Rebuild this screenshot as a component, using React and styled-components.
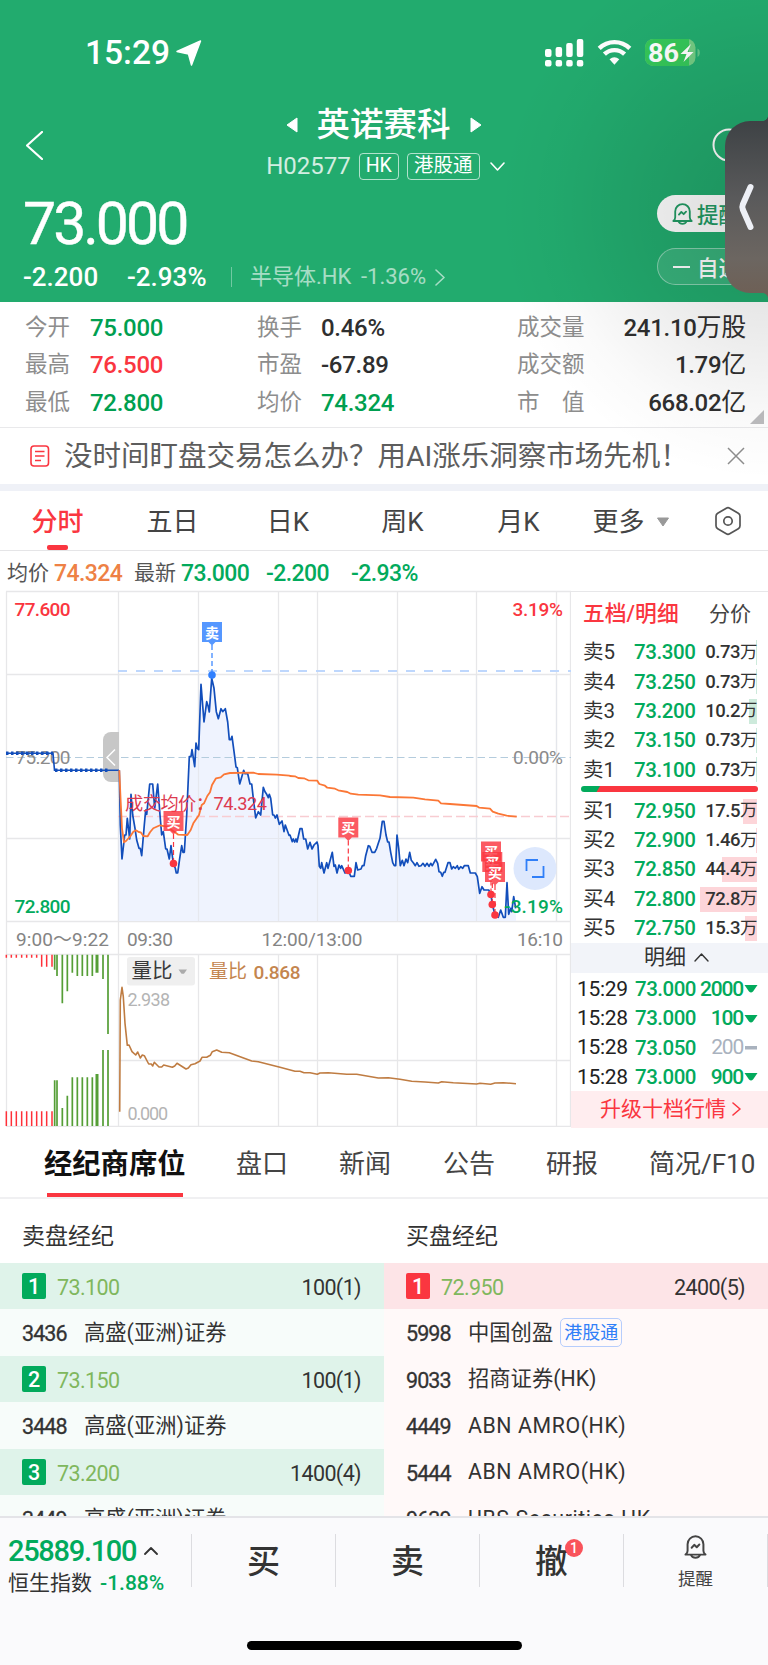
import React from 'react'
import styled, { createGlobalStyle } from 'styled-components'

const GREEN = '#02aa5c'
const RED = '#fa3640'

const sellLevels = [
  { label: '卖5', price: '73.300', vol: '0.73', bar: 1 },
  { label: '卖4', price: '73.250', vol: '0.73', bar: 1 },
  { label: '卖3', price: '73.200', vol: '10.2', bar: 8 },
  { label: '卖2', price: '73.150', vol: '0.73', bar: 1 },
  { label: '卖1', price: '73.100', vol: '0.73', bar: 1 },
]

const buyLevels = [
  { label: '买1', price: '72.950', vol: '17.5', bar: 14 },
  { label: '买2', price: '72.900', vol: '1.46', bar: 1 },
  { label: '买3', price: '72.850', vol: '44.4', bar: 35 },
  { label: '买4', price: '72.800', vol: '72.8', bar: 57 },
  { label: '买5', price: '72.750', vol: '15.3', bar: 12 },
]

const trades = [
  { time: '15:29', price: '73.000', qty: '2000', down: true },
  { time: '15:28', price: '73.000', qty: '100', down: true },
  { time: '15:28', price: '73.050', qty: '200', down: false },
  { time: '15:28', price: '73.000', qty: '900', down: true },
]

const sellBrokers = [
  { level: 1, price: '73.100', total: '100(1)' },
  { code: '3436', name: '高盛(亚洲)证券' },
  { level: 2, price: '73.150', total: '100(1)' },
  { code: '3448', name: '高盛(亚洲)证券' },
  { level: 3, price: '73.200', total: '1400(4)' },
  { code: '3449', name: '高盛(亚洲)证券' },
]

const buyBrokers = [
  { level: 1, price: '72.950', total: '2400(5)' },
  { code: '5998', name: '中国创盈', tag: '港股通' },
  { code: '9033', name: '招商证券(HK)' },
  { code: '4449', name: 'ABN AMRO(HK)', latin: true },
  { code: '5444', name: 'ABN AMRO(HK)', latin: true },
  { code: '9639', name: 'UBS Securities HK', latin: true },
]

// intraday series, first and second half of the session, three units per pixel
const priceA =
  '358,556 361,720 366,822 374,750 378,750 382,700 389,762 393,628 398,690 405,730 410,765 417,790 421,790 425,812 433,720 437,675 440,688 449,597 458,597 464,670 466,655 473,597 480,690 485,750 490,740 497,792 501,792 508,822 513,782 520,835 526,850 529,864 533,864 539,820 545,782 549,802 553,802 560,690 568,515 573,514 576,494 584,545 588,474 592,490 596,494 603,298 612,411 620,350 624,362 628,381 635,280 642,310 649,380 655,401 663,371 668,380 676,371 683,411 688,464 692,464 696,454 704,515 708,546 712,548 719,597 731,556 735,566 743,566 750,597 755,597 760,640 767,699 775,680 782,690 790,607 795,620 800,628 805,638 808,628 812,640 818,690 822,690 826,699 831,690 838,718 846,708 852,740 856,720 867,751'
const priceB =
  '0,750 7,770 10,762 14,771 18,762 21,771 30,731 36,731 41,762 47,762 53,792 60,772 66,792 72,780 81,771 84,782 88,844 92,850 95,833 102,864 110,833 114,850 127,802 132,844 136,840 141,864 147,840 152,850 155,842 165,864 175,856 182,874 193,874 198,833 203,855 213,852 217,842 222,842 227,812 235,782 239,784 246,802 254,802 260,790 265,775 270,760 277,709 282,709 288,750 293,771 297,771 302,802 308,833 313,842 317,842 321,750 326,790 331,842 337,826 342,842 348,822 353,833 359,802 364,826 370,833 376,842 381,833 387,844 393,842 399,835 405,844 411,835 417,844 422,835 427,842 437,823 443,835 447,860 452,862 457,874 461,862 465,862 474,833 480,833 485,852 490,845 496,850 502,842 506,853 512,845 518,850 523,842 535,842 541,864 556,864 562,875 569,925 576,905 582,915 596,915 603,928 607,958 615,989 625,997 632,975 640,997 646,997 651,893 656,988 662,970 665,980 671,935 677,970'
const avgA =
  '358,556 362,650 366,730 372,772 378,768 390,755 400,740 408,736 416,741 422,742 430,753 443,754 450,742 460,730 480,721 500,725 525,742 535,749 562,750 572,735 580,715 597,690 605,660 612,655 622,633 630,622 636,600 648,580 662,577 672,568 690,564 760,563 775,567 830,569 868,572'
const avgB =
  '0,573 15,574 25,579 42,580 55,586 82,587 88,597 105,602 112,608 135,611 145,616 172,621 182,626 205,629 270,631 300,636 370,638 405,643 445,647 453,655 480,657 560,663 568,668 600,671 608,680 625,686 650,692 680,695'
const ratioLine =
  '359,545 361,210 366,172 370,200 375,280 382,346 387,345 396,365 407,375 413,366 421,384 427,375 433,377 446,402 454,402 458,408 463,397 477,411 485,411 491,405 517,412 524,408 531,400 558,417 565,414 573,404 585,401 600,393 606,382 620,382 631,376 637,365 650,360 665,367 688,368 755,393 775,395 840,412 885,424 900,424 912,428 930,428 952,433 960,429 985,428 1040,433 1070,433 1135,444 1165,443 1200,448 1235,454 1275,456 1315,459 1325,455 1360,458 1430,462 1440,460 1472,463 1485,459 1510,458 1548,461'

const shift = (points, dx, dy) =>
  points
    .split(' ')
    .map((p) => {
      const [x, y] = p.split(',').map(Number)
      return `${(x / 3 + dx).toFixed(1)},${(y / 3 + dy).toFixed(1)}`
    })
    .join(' ')

const pricePoints = `${shift(priceA, 0, 5)} ${shift(priceB, 290, 5)}`
const avgPoints = `${shift(avgA, 0, 5)} ${shift(avgB, 290, 5)}`
const ratioPoints = shift(ratioLine, 0, 350)

const gridX = [118.5, 198.5, 278.5, 317.5, 397.5, 476.5, 556.5]
const redBars = [19, 34, 49, 65, 80, 95, 110, 125, 140, 156]
const greenBars = [
  { x: 164, top: 119, bottom: 451 },
  { x: 171, top: 138, bottom: 451 },
  { x: 187, top: 220, bottom: 534 },
  { x: 202, top: 184, bottom: 497 },
  { x: 217, top: 128, bottom: 442 },
  { x: 232, top: 138, bottom: 442 },
  { x: 247, top: 138, bottom: 442 },
  { x: 262, top: 138, bottom: 442 },
  { x: 277, top: 138, bottom: 442 },
  { x: 291, top: 128, bottom: 432, wide: true },
  { x: 309, top: 147, bottom: 360 },
  { x: 324, top: 312, bottom: 360 },
]

const label = { fontSize: 19, fontWeight: 500, fontFamily: 'Roboto, "Noto Sans CJK SC", sans-serif' }

function Bell({ size }) {
  return (
    <svg width={size} height={size} viewBox="0 0 24 24" fill="none" stroke="currentColor" strokeWidth="1.9" strokeLinecap="round" strokeLinejoin="round">
      <path d="M2.4 19.8H21.6C19.8 18.6 19.6 17.600 19.6 16V9.800a7.600 7.600 0 0 0-15.200 0V16C4.400 17.600 4.200 18.600 2.400 19.800z" />
      <path d="M7.800 20.200q1.200 2.600 4.200 2.600t4.200-2.600M8.300 13.200l2.500-2.800 2.400 2.300 2.500-2.600" />
    </svg>
  )
}

function Chevron({ dir, w, h, stroke = 1.6 }) {
  const paths = {
    left: `M${w - 1} 1L1 ${h / 2}L${w - 1} ${h - 1}`,
    right: `M1 1L${w - 1} ${h / 2}L1 ${h - 1}`,
    up: `M1 ${h - 1}L${w / 2} 1L${w - 1} ${h - 1}`,
    down: `M1 1L${w / 2} ${h - 1}L${w - 1} 1`,
  }
  return (
    <svg width={w} height={h} fill="none" stroke="currentColor" strokeWidth={stroke} strokeLinecap="round" strokeLinejoin="round">
      <path d={paths[dir]} />
    </svg>
  )
}

function StatusIcons() {
  return (
    <svg width="158" height="30" viewBox="0 0 158 30">
      <g fill="#fff">
        <rect x="1" y="10" width="6.5" height="8" rx="2" />
        <rect x="11.6" y="8" width="6.5" height="10" rx="2" />
        <rect x="22.2" y="4" width="6.5" height="14" rx="2" />
        <rect x="32.8" y="0" width="6.5" height="18" rx="2" />
        <rect x="1" y="21" width="6.5" height="6.5" rx="2" />
        <rect x="11.6" y="21" width="6.5" height="6.5" rx="2" />
        <rect x="22.2" y="21" width="6.5" height="6.5" rx="2" />
        <rect x="32.8" y="21" width="6.5" height="6.5" rx="2" />
        <path d="M65.5 20.2a8 8 0 0 1 9.8 0L70.4 25.8z" />
      </g>
      <g fill="none" stroke="#fff" strokeWidth="4.4">
        <path d="M55.2 9.3a22 22 0 0 1 30.6 0" />
        <path d="M60.4 15.2a14.5 14.5 0 0 1 20.2 0" />
      </g>
      <rect x="101" y="0" width="50.5" height="27" rx="8.5" fill="#73cc83" />
      <path d="M109.5 0H145v27h-35.5a8.5 8.5 0 0 1-8.5-8.5v-10a8.500 8.500 0 0 1 8.500-8.500z" fill="#35c759" />
      <path d="M153.5 9.5a5 5 0 0 1 0 8.5z" fill="#62c688" />
      <text x="104" y="22.5" fontSize="25" fontWeight="700" fill="#fff" textLength="31" lengthAdjust="spacingAndGlyphs">86</text>
      <path d="M147 5l-10.5 10h6l-3 8 10-10h-6z" fill="#fff" />
    </svg>
  )
}

function Marker({ x, y, text, color, dotY }) {
  return (
    <g>
      <path d={`M${x} ${y + 23}V${dotY}`} stroke={color} strokeWidth="1.2" strokeDasharray="5 3" />
      <path d={`M${x - 10} ${y}h20v20h-6.5l-3.5 3.5l-3.5 -3.5h-6.5z`} fill={color} fillOpacity=".82" />
      <text x={x} y={y + 15.5} fontSize="14" fontWeight="700" fill="#fff" textAnchor="middle">
        {text}
      </text>
      <circle cx={x} cy={dotY} r="3.8" fill={color} />
    </g>
  )
}

function Chart() {
  return (
    <ChartSvg width="571" height="547" viewBox="0 0 571 547">
      <g stroke="#e7e7e9" strokeWidth="1.3" fill="none">
        <path d="M6 11.5H571M6 94.5H571M6 258.5H571M6 341.5H571M6 374.5H571M118 480.5H571M6 546.3H571" />
        <path d="M6.5 11.5V546.5M118.5 341V374M570.5 11V546" />
        {gridX.map((x) => (
          <path key={x} d={`M${x} 11V341M${x} 374V546`} />
        ))}
      </g>
      <path d={`M118.5 341L${pricePoints.split(' ').join('L')}L516 341z`} fill="#eff3fe" />
      <g stroke="#e4e6ec" strokeWidth="1.2" opacity=".8">
        {gridX.map((x) => (
          <path key={x} d={`M${x} 94V341`} />
        ))}
        <path d="M118 258.5H516" />
      </g>
      <path d="M118 91H571" stroke="#bed7fd" strokeWidth="2" strokeDasharray="9 9" />
      <path d="M6 177.500H571" stroke="#b4ccdd" strokeWidth="1.2" strokeDasharray="7.5 4" />
      <path d="M118 236.5H571" stroke="#f8ccd1" strokeWidth="1.3" strokeDasharray="9 4" />
      <text x="15.5" y="184" {...label} fontWeight="400" fill="#8b8b8b" textLength="55">75.200</text>
      <path d="M103 160a8 8 0 0 1 8-8h8v50h-8a8 8 0 0 1-8-8z" fill="#c7c7c7" />
      <path d="M115 169.5l-8 8 8 8" stroke="#fff" strokeWidth="1.5" fill="none" />
      <path d="M6 173.2H53L54.5 190.2H119" stroke="#124ebb" strokeWidth="1.6" fill="none" />
      <path d="M6 173.2H53M55 190.2H109" stroke="#124ebb" strokeWidth="3.6" strokeDasharray="2.5 2.5" />
      <polyline points={pricePoints} fill="none" stroke="#124ebb" strokeWidth="1.7" strokeLinejoin="round" />
      <polyline points={avgPoints} fill="none" stroke="#fb7736" strokeWidth="1.8" strokeLinejoin="round" />
      <text x="125" y="229.5" fontSize="18.2" fill="#dc3b50" textLength="142">成交均价：74.324</text>
      <Marker x={212} y={42} text="卖" color="#3080ff" dotY={95} />
      <Marker x={173.5} y={231} text="买" color={RED} dotY={283.5} />
      <Marker x={348.3} y={237.5} text="买" color={RED} dotY={290.5} />
      <Marker x={491} y={261.5} text="买" color={RED} dotY={314.5} />
      <Marker x={492.3} y={272} text="买" color={RED} dotY={324.5} />
      <Marker x={495} y={282} text="买" color={RED} dotY={335} />
      <text x="14.5" y="35.500" {...label} fill={RED} textLength="56">77.600</text>
      <text x="14.5" y="333" {...label} fill={GREEN} textLength="56">72.800</text>
      <text x="512.5" y="35.500" {...label} fill={RED} textLength="50.5">3.19%</text>
      <text x="513" y="184" {...label} fontWeight="400" fill="#8b8b8b" textLength="50">0.00%</text>
      <text x="504" y="333" {...label} fill={GREEN} textLength="59">-3.19%</text>
      <circle cx="535" cy="288.5" r="21.5" fill="#dde8fd" />
      <path d="M526.5 291V280H538M543.5 286V297H532" fill="none" stroke="#307ff8" strokeWidth="1.8" />
      <g {...label} fill="#848484" fontWeight="400">
        <text x="16" y="365.5" textLength="93">9:00～9:22</text>
        <text x="127" y="365.5" textLength="46">09:30</text>
        <text x="261.5" y="365.5" textLength="101">12:00/13:00</text>
        <text x="517" y="365.5" textLength="46">16:10</text>
      </g>
      {redBars.map((x, i) => (
        <path key={x} d={`M${x / 3} 374.7V${i > 6 ? 386.7 : 377.7}M${x / 3} 531.3V546`} stroke="#ff3039" strokeWidth="1.5" />
      ))}
      {greenBars.map((b) => (
        <path
          key={b.x}
          d={`M${b.x / 3} 374.7V${350 + b.top / 3}M${b.x / 3} ${350 + b.bottom / 3}V546`}
          stroke="#559e36"
          strokeWidth={b.wide ? 3 : 1.7}
        />
      ))}
      <rect x="127" y="377" width="68" height="28.5" rx="3" fill="#efefef" />
      <text x="131.5" y="398" fontSize="20.5" fill="#3a3a3a">量比</text>
      <path d="M178.5 389.5h8.5l-3 4.2h-2.5z" fill="#ababab" />
      <text x="209" y="398" fontSize="19" fill="#c4854e" textLength="38">量比</text>
      <text x="253.5" y="398.5" {...label} fill="#c4854e" textLength="47">0.868</text>
      <g {...label} fontWeight="400" fontSize="18" fill="#b4b4b4">
        <text x="127.5" y="426" textLength="42.5">2.938</text>
        <text x="127.5" y="540" textLength="40.5">0.000</text>
      </g>
      <polyline points={ratioPoints} fill="none" stroke="#bf7c42" strokeWidth="1.6" strokeLinejoin="round" />
    </ChartSvg>
  )
}

function Level({ row, color }) {
  return (
    <LevelRow>
      <LevelName>{row.label}</LevelName>
      <LevelPrice>{row.price}</LevelPrice>
      <LevelVol $bar={row.bar} $color={color}>
        {row.vol}
        <small>万</small>
      </LevelVol>
    </LevelRow>
  )
}

function Brokers({ title, rows, side }) {
  return (
    <BrokerColumn>
      <BrokerTitle>{title}</BrokerTitle>
      {rows.map((row) => (
        <BrokerRow key={row.code || row.level} $side={side} $head={!!row.level}>
          {row.level ? (
            <>
              <LevelBadge $side={side}>{row.level}</LevelBadge>
              <BrokerPrice>{row.price}</BrokerPrice>
              <BrokerTotal>{row.total}</BrokerTotal>
            </>
          ) : (
            <>
              <BrokerCode>{row.code}</BrokerCode>
              <BrokerName $latin={row.latin}>{row.name}</BrokerName>
              {row.tag && <BrokerTag>{row.tag}</BrokerTag>}
            </>
          )}
        </BrokerRow>
      ))}
    </BrokerColumn>
  )
}

function App() {
  return (
    <Page>
      <GlobalStyle />
      <Header>
        <StatusBar>
          <Clock>15:29</Clock>
          <svg width="26" height="26" viewBox="0 0 26 26">
            <path d="M24.5 1L15.5 25 12.5 14 1 11.5z" fill="#fff" stroke="#fff" strokeWidth="1.5" strokeLinejoin="round" />
          </svg>
          <StatusRight>
            <StatusIcons />
          </StatusRight>
        </StatusBar>
        <TitleBar>
          <Chevron dir="left" w={17} h={29} stroke={2.2} />
          <TitleBlock>
            <TitleLine>
              <svg width="12" height="16"><path d="M11 1v14L1 8z" fill="#fff" stroke="#fff" strokeLinejoin="round" /></svg>
              <Title>英诺赛科</Title>
              <svg width="12" height="16"><path d="M1 1v14L11 8z" fill="#fff" stroke="#fff" strokeLinejoin="round" /></svg>
            </TitleLine>
            <CodeLine>
              <Code>H02577</Code>
              <Tag $w={40}>HK</Tag>
              <Tag $w={73}>港股通</Tag>
              <Chevron dir="down" w={15} h={9} />
            </CodeLine>
          </TitleBlock>
          <svg width="34" height="34" fill="none" stroke="#fff" strokeWidth="2"><circle cx="17" cy="17" r="15.5" /></svg>
        </TitleBar>
        <PriceBar>
          <div>
            <Price>73.000</Price>
            <ChangeLine>
              <Change $w={104}>-2.200</Change>
              <Change $w={104}>-2.93%</Change>
              <Sector>
                <SectorName>半导体.HK</SectorName>
                <span>-1.36%</span>
                <Chevron dir="right" w={10} h={17} />
              </Sector>
            </ChangeLine>
          </div>
          <Actions>
            <Pill $solid>
              <Bell size={23} />
              提醒
            </Pill>
            <Pill>
              <Dash />
              自选
            </Pill>
          </Actions>
        </PriceBar>
        <DrawerShade />
        <DrawerHandle>
          <svg width="17" height="48" fill="none" stroke="currentColor" strokeWidth="6" strokeLinecap="round" strokeLinejoin="round">
            <path d="M12.5 4L4.800 21.5q-1 2.500 0 5L12.500 44" />
          </svg>
        </DrawerHandle>
      </Header>

      <Stats>
        <dt>今开</dt><Stat $c="#009f50">75.000</Stat>
        <dt>换手</dt><Stat>0.46%</Stat>
        <dt>成交量</dt><Stat $right>241.10<big>万股</big></Stat>
        <dt>最高</dt><Stat $c={RED}>76.500</Stat>
        <dt>市盈</dt><Stat>-67.89</Stat>
        <dt>成交额</dt><Stat $right>1.79<big>亿</big></Stat>
        <dt>最低</dt><Stat $c="#009f50">72.800</Stat>
        <dt>均价</dt><Stat $c="#009f50">74.324</Stat>
        <dt>市　值</dt><Stat $right>668.02<big>亿</big></Stat>
        <Corner />
      </Stats>

      <Notice>
        <svg width="20" height="23" fill="none" stroke={RED} strokeWidth="1.6">
          <rect x="1" y="1" width="17.5" height="20" rx="3" />
          <path d="M5 6.5h9.5M5 11h9.5M5 15.5h6" />
        </svg>
        <NoticeText>没时间盯盘交易怎么办？用AI涨乐洞察市场先机！</NoticeText>
        <svg width="18" height="18" stroke="#8d8d8d" strokeWidth="1.5"><path d="M1 1L17 17M17 1L1 17" /></svg>
      </Notice>

      <PeriodTabs>
        <Period $w={115} $active>分时</Period>
        <Period $w={115}>五日</Period>
        <Period $w={116}>日K</Period>
        <Period $w={113}>周K</Period>
        <Period $w={119}>月K</Period>
        <Period $w={106}>
          更多
          <svg width="14" height="10"><path d="M1.5 1h11L7 9z" fill="#999" stroke="#999" strokeLinejoin="round" /></svg>
        </Period>
        <Settings width="28" height="30" viewBox="0 0 28 30">
          <path d="M12.3 2.2q1.7-1 3.4 0l8.6 5q1.7 1 1.7 3v9.6q0 2-1.7 3l-8.6 5q-1.7 1-3.4 0l-8.6-5q-1.7-1-1.7-3v-9.6q0-2 1.7-3z" />
          <circle cx="14" cy="15" r="4.2" />
        </Settings>
      </PeriodTabs>

      <QuoteLine>
        <QuoteLabel>均价</QuoteLabel>
        <Quote $w={80} $c="#ee8145">74.324</Quote>
        <QuoteLabel>最新</QuoteLabel>
        <Quote $w={85}>73.000</Quote>
        <Quote $w={85}>-2.200</Quote>
        <Quote $w={80}>-2.93%</Quote>
      </QuoteLine>

      <Market>
        <Chart />
        <Book>
          <BookTabs>
            <BookTab $active>五档/明细</BookTab>
            <BookTab>分价</BookTab>
          </BookTabs>
          {sellLevels.map((row) => (
            <Level key={row.label} row={row} color="#cdeadb" />
          ))}
          <RatioBar />
          {buyLevels.map((row) => (
            <Level key={row.label} row={row} color="#fdd5d9" />
          ))}
          <DetailHead>
            明细
            <Chevron dir="up" w={15} h={9} stroke={1.4} />
          </DetailHead>
          {trades.map((t, i) => (
            <TradeRow key={i}>
              <TradeTime>{t.time}</TradeTime>
              <TradePrice>{t.price}</TradePrice>
              <TradeQty $down={t.down}>{t.qty}</TradeQty>
              <svg width="14" height="8">
                {t.down ? <path d="M.5 0h13l-4.5 6.5q-2 1.8-4 0z" fill={GREEN} /> : <rect x="1" y="2" width="12" height="3.5" fill="#a9b2be" />}
              </svg>
            </TradeRow>
          ))}
          <Upgrade>
            升级十档行情
            <Chevron dir="right" w={9} h={14} />
          </Upgrade>
        </Book>
      </Market>

      <InfoTabs>
        <InfoTab $w={192} $active>经纪商席位</InfoTab>
        <InfoTab $w={103}>盘口</InfoTab>
        <InfoTab $w={104}>新闻</InfoTab>
        <InfoTab $w={103}>公告</InfoTab>
        <InfoTab $w={103}>研报</InfoTab>
        <InfoTab $w={118}>简况/F10</InfoTab>
      </InfoTabs>

      <BrokerBoard>
        <Brokers title="卖盘经纪" rows={sellBrokers} side="sell" />
        <Brokers title="买盘经纪" rows={buyBrokers} side="buy" />
      </BrokerBoard>

      <BottomBar>
        <IndexBox>
          <IndexValue>
            25889.100
            <Chevron dir="up" w={14} h={8} stroke={1.8} />
          </IndexValue>
          <IndexName>
            恒生指数<em>-1.88%</em>
          </IndexName>
        </IndexBox>
        <Trade>买</Trade>
        <Trade>卖</Trade>
        <Trade>
          撤<Count>1</Count>
        </Trade>
        <Remind>
          <Bell size={25} />
          提醒
        </Remind>
        <HomeIndicator />
      </BottomBar>
    </Page>
  )
}

const GlobalStyle = createGlobalStyle`
  * {
    box-sizing: border-box;
  }
  body {
    margin: 0;
    background: #fff;
    font-family: Roboto, 'Noto Sans CJK SC', sans-serif;
    color: #333;
  }
  svg {
    flex: none;
    display: block;
  }
`

const Page = styled.div`
  width: 768px;
  height: 1665px;
  overflow: hidden;
  display: flex;
  flex-direction: column;
  line-height: 1;
`

const Header = styled.header`
  position: relative;
  height: 302px;
  flex: none;
  background: #22ab6e;
  color: #fff;
`

const StatusBar = styled.div`
  display: flex;
  align-items: center;
  height: 106px;
  padding: 0 66px 0 85px;
`

const Clock = styled.span`
  width: 91px;
  font-size: 33.5px;
  font-weight: 500;
`

const StatusRight = styled.div`
  margin-left: auto;
  padding-top: 1px;
`

const TitleBar = styled.div`
  display: flex;
  align-items: center;
  justify-content: space-between;
  height: 78px;
  padding: 0 22px 0 26px;
`

const TitleBlock = styled.div`
  display: flex;
  flex-direction: column;
  align-items: center;
  gap: 10px;
  padding: 0 0 4px 16px;
`

const TitleLine = styled.div`
  display: flex;
  align-items: center;
  gap: 19px;
  margin-right: 4px;
`

const Title = styled.h1`
  margin: 0;
  font-size: 33.5px;
  line-height: 36px;
  font-weight: 500;
`

const CodeLine = styled.div`
  display: flex;
  align-items: center;
  gap: 8px;
  svg {
    margin-left: 2px;
  }
`

const Code = styled.span`
  font-size: 24px;
  opacity: 0.8;
`

const Tag = styled.span`
  width: ${(p) => p.$w}px;
  height: 27px;
  border: 1.5px solid rgba(255, 255, 255, 0.65);
  border-radius: 4px;
  font-size: 19.5px;
  line-height: 24px;
  text-align: center;
`

const PriceBar = styled.div`
  display: flex;
  justify-content: space-between;
  padding-left: 23px;
`

const Price = styled.div`
  height: 78px;
  font-size: 59px;
  line-height: 80px;
  letter-spacing: -3px;
  -webkit-text-stroke: 0.4px #fff;
`

const ChangeLine = styled.div`
  display: flex;
  align-items: center;
  height: 30px;
`

const Change = styled.span`
  width: ${(p) => p.$w}px;
  font-size: 26px;
  font-weight: 500;
`

const Sector = styled.div`
  display: flex;
  align-items: center;
  gap: 9px;
  height: 20px;
  padding-left: 18px;
  border-left: 1px solid rgba(255, 255, 255, 0.6);
  font-size: 22px;
  opacity: 0.6;
`

const SectorName = styled.span`
  width: 102px;
`

const Actions = styled.div`
  display: flex;
  flex-direction: column;
  gap: 16px;
  padding-top: 11px;
`

const Pill = styled.button`
  display: flex;
  align-items: center;
  gap: 3px;
  width: 111px;
  height: 37px;
  padding: 0 0 0 14px;
  border: ${(p) => (p.$solid ? 'none' : '1.5px solid rgba(255, 255, 255, .4)')};
  border-radius: 19px 0 0 19px;
  background: ${(p) => (p.$solid ? '#fff' : 'rgba(255, 255, 255, .1)')};
  color: ${(p) => (p.$solid ? '#229c64' : '#fff')};
  font: 500 21.5px Roboto, 'Noto Sans CJK SC', sans-serif;
  white-space: nowrap;
`

const Dash = styled.i`
  width: 17px;
  height: 2px;
  margin: 0 4px 0 1px;
  background: currentColor;
`

// soft shade round the drawer, spilling over the header and the stats below it
const DrawerShade = styled.div`
  position: absolute;
  z-index: 2;
  right: 0;
  top: -60px;
  width: 270px;
  height: 540px;
  background: radial-gradient(closest-side, rgba(0, 0, 0, 0.15), rgba(0, 0, 0, 0.08) 45%, rgba(0, 0, 0, 0.02) 80%, transparent) 0 0 / 540px 540px no-repeat;
  pointer-events: none;
`

const DrawerHandle = styled.div`
  position: absolute;
  z-index: 3;
  right: 0;
  top: 121px;
  width: 43px;
  height: 172px;
  display: flex;
  align-items: center;
  justify-content: center;
  border-radius: 25px 0 0 25px;
  background: linear-gradient(#3e4245, #5a5a5b 45%, #6c6661 80%, #6e6056);
  color: #eef0f6;
  &::before,
  &::after {
    content: '';
    position: absolute;
    right: 0;
    width: 5px;
    height: 5px;
  }
  &::before {
    top: -5px;
    background: radial-gradient(circle at 0 0, transparent 4.5px, #3e4245 5px);
  }
  &::after {
    bottom: -5px;
    background: radial-gradient(circle at 0 100%, transparent 4.5px, #6e6056 5px);
  }
`

const Stats = styled.dl`
  position: relative;
  display: grid;
  grid-template-columns: 65px 167px 64px 196px 91px 138px;
  grid-auto-rows: 37.5px;
  align-items: center;
  height: 126px;
  flex: none;
  margin: 0;
  padding: 6px 22px 0 25px;
  border-bottom: 1.5px solid #e9e9eb;
  dt {
    font-size: 22.5px;
    color: #8d8d8d;
    white-space: nowrap;
  }
`

const Stat = styled.dd`
  margin: 0;
  padding-top: 2px;
  color: ${(p) => p.$c || '#2f2f2f'};
  font-size: 24px;
  font-weight: 500;
  letter-spacing: -0.3px;
  line-height: 26px;
  text-align: ${(p) => (p.$right ? 'right' : 'left')};
  white-space: nowrap;
  big {
    font-size: 25px;
    font-weight: 400;
    line-height: 1;
  }
`

const Corner = styled.i`
  position: absolute;
  right: 4px;
  bottom: 3px;
  border: solid transparent;
  border-width: 0 0 14px 14px;
  border-bottom-color: #bdbdbf;
`

const Notice = styled.div`
  display: flex;
  align-items: center;
  height: 63px;
  flex: none;
  padding: 0 23px 0 30px;
  border-bottom: 7px solid #eff1f7;
`

const NoticeText = styled.span`
  flex: 1;
  padding: 3px 0 0 14px;
  font-size: 28.5px;
  color: #5d5d5d;
  white-space: nowrap;
`

const PeriodTabs = styled.nav`
  display: flex;
  align-items: center;
  height: 60px;
  flex: none;
  border-bottom: 1.5px solid #e5e5e7;
`

const Period = styled.div`
  position: relative;
  display: flex;
  align-items: center;
  justify-content: center;
  gap: 11px;
  width: ${(p) => p.$w}px;
  height: 100%;
  padding-top: 2px;
  font-size: 26px;
  font-weight: ${(p) => (p.$active ? 500 : 400)};
  color: ${(p) => (p.$active ? RED : '#444')};
  &::after {
    content: '';
    display: ${(p) => (p.$active ? 'block' : 'none')};
    position: absolute;
    bottom: 0;
    left: 47px;
    width: 21px;
    height: 5px;
    border-radius: 2px;
    background: ${RED};
  }
`

const Settings = styled.svg`
  margin-left: 30px;
  fill: none;
  stroke: #555;
  stroke-width: 1.7;
  stroke-linejoin: round;
`

const QuoteLine = styled.div`
  display: flex;
  align-items: center;
  height: 40px;
  flex: none;
  padding: 4px 0 0 7px;
`

const QuoteLabel = styled.span`
  width: 47px;
  font-size: 21px;
  color: #555;
`

const Quote = styled.span`
  width: ${(p) => p.$w}px;
  font-size: 23px;
  font-weight: 500;
  letter-spacing: -0.6px;
  color: ${(p) => p.$c || GREEN};
`

const Market = styled.section`
  display: flex;
  height: 536px;
  flex: none;
`

const ChartSvg = styled.svg`
  margin-top: -11px;
`

const Book = styled.aside`
  width: 197px;
  border-top: 1.5px solid #e7e7e9;
`

const BookTabs = styled.div`
  display: flex;
  justify-content: space-between;
  align-items: center;
  height: 46px;
  padding: 0 17px 2px 12px;
`

const BookTab = styled.span`
  font-size: ${(p) => (p.$active ? 21.8 : 21)}px;
  font-weight: ${(p) => (p.$active ? 500 : 400)};
  color: ${(p) => (p.$active ? RED : '#444')};
`

const LevelRow = styled.div`
  display: flex;
  align-items: center;
  height: 29.3px;
  padding: 0 11px 0 12px;
`

const LevelName = styled.span`
  width: 51px;
  font-size: 20.5px;
`

const LevelPrice = styled.span`
  flex: 1;
  font-size: 20.5px;
  font-weight: 500;
  letter-spacing: -0.4px;
  color: ${GREEN};
`

const LevelVol = styled.span`
  display: flex;
  align-items: center;
  justify-content: flex-end;
  height: 25px;
  min-width: 57px;
  background: linear-gradient(${(p) => p.$color}, ${(p) => p.$color}) right / ${(p) => p.$bar}px 100% no-repeat;
  font-size: 18.5px;
  font-weight: 500;
  letter-spacing: -0.5px;
  small {
    font-size: 17.5px;
    font-weight: 400;
  }
`

const RatioBar = styled.div`
  height: 6px;
  margin: 2px 10px 4px;
  border-radius: 3px;
  background: linear-gradient(120deg, ${GREEN} 16px, ${RED} 17px);
`

const DetailHead = styled.div`
  display: flex;
  align-items: center;
  justify-content: center;
  gap: 8px;
  height: 30px;
  padding-left: 14px;
  background: #f2f4f9;
  font-size: 21px;
`

const TradeRow = styled.div`
  display: flex;
  align-items: center;
  height: 29.4px;
  padding: 3px 10px 0 6px;
  font-size: 21px;
`

const TradeTime = styled.span`
  width: 58px;
  letter-spacing: -0.3px;
  color: #222;
`

const TradePrice = styled.span`
  width: 60px;
  font-size: 20.5px;
  font-weight: 500;
  letter-spacing: -0.5px;
  color: ${GREEN};
`

const TradeQty = styled.span`
  flex: 1;
  padding-right: 1px;
  text-align: right;
  font-weight: ${(p) => (p.$down ? 500 : 400)};
  letter-spacing: -1.2px;
  color: ${(p) => (p.$down ? GREEN : '#a9b2be')};
`

const Upgrade = styled.div`
  display: flex;
  align-items: center;
  justify-content: center;
  gap: 6px;
  height: 37px;
  padding-left: 2px;
  background: #ffedef;
  color: ${RED};
  font-size: 21px;
`

const InfoTabs = styled.nav`
  display: flex;
  height: 72px;
  flex: none;
  padding-left: 44px;
  border-bottom: 2px solid #f0f0f2;
`

const InfoTab = styled.div`
  position: relative;
  width: ${(p) => p.$w}px;
  height: 100%;
  font-size: ${(p) => (p.$active ? 28.3 : 26)}px;
  line-height: 75px;
  font-weight: ${(p) => (p.$active ? 700 : 400)};
  color: ${(p) => (p.$active ? '#111' : '#444')};
  white-space: nowrap;
  &::after {
    content: '';
    display: ${(p) => (p.$active ? 'block' : 'none')};
    position: absolute;
    left: 3px;
    bottom: 0;
    width: 136px;
    height: 4px;
    background: ${RED};
  }
`

const BrokerBoard = styled.section`
  display: flex;
  height: 317px;
  flex: none;
  overflow: hidden;
`

const BrokerColumn = styled.div`
  width: 384px;
`

const BrokerTitle = styled.div`
  height: 64px;
  padding-left: 22px;
  font-size: 23px;
  line-height: 75px;
`

const rowColor = ({ $side, $head }) => {
  if ($side === 'sell') return $head ? '#dff3ea' : '#f7fcfa'
  return $head ? '#fde4e7' : '#fff9f9'
}

const BrokerRow = styled.div`
  display: flex;
  align-items: center;
  height: 46.4px;
  padding: 0 23px 0 22px;
  background: ${rowColor};
  font-size: 21.5px;
  white-space: nowrap;
`

const LevelBadge = styled.span`
  width: 24px;
  height: 26px;
  margin-right: 11px;
  border-radius: 2px;
  background: ${(p) => (p.$side === 'sell' ? GREEN : RED)};
  color: #fff;
  font-weight: 500;
  line-height: 27px;
  text-align: center;
`

const BrokerPrice = styled.span`
  flex: 1;
  padding-top: 3px;
  letter-spacing: -0.6px;
  color: #80b75d;
`

const BrokerTotal = styled.span`
  padding-top: 3px;
  letter-spacing: -0.6px;
`

const BrokerCode = styled.span`
  width: 62px;
  padding-top: 3px;
  letter-spacing: -0.9px;
  -webkit-text-stroke: 0.3px;
`

const BrokerName = styled.span`
  font-size: 21.3px;
  letter-spacing: ${(p) => (p.$latin ? 0.6 : 0)}px;
`

const BrokerTag = styled.span`
  height: 29px;
  margin-left: 7px;
  padding: 0 3px;
  border: 1.5px solid #b6cdfc;
  border-radius: 5px;
  color: #307ff8;
  font-size: 18px;
  line-height: 27px;
`

const BottomBar = styled.footer`
  position: relative;
  display: flex;
  height: 149px;
  flex: none;
  padding-top: 16px;
  border-top: 2px solid #e4e4e8;
  background: #fafafc;
`

const IndexBox = styled.div`
  width: 191px;
  padding: 3px 0 0 8px;
`

const IndexValue = styled.div`
  display: flex;
  align-items: center;
  gap: 8px;
  height: 28px;
  font-size: 29px;
  font-weight: 500;
  letter-spacing: -1.3px;
  color: ${GREEN};
  svg {
    color: #333;
  }
`

const IndexName = styled.div`
  display: flex;
  align-items: center;
  gap: 8px;
  height: 36px;
  font-size: 21px;
  em {
    font-style: normal;
    font-weight: 500;
    color: ${GREEN};
  }
`

const Trade = styled.div`
  position: relative;
  width: 144px;
  height: 53px;
  border-left: 1px solid #dcdce0;
  font-size: 33px;
  font-weight: 500;
  line-height: 55px;
  text-align: center;
`

const Count = styled.span`
  position: absolute;
  left: 85px;
  top: 5px;
  width: 18px;
  height: 18px;
  border-radius: 50%;
  background: #f9535b;
  color: #fff;
  font-size: 14px;
  line-height: 18px;
`

const Remind = styled.div`
  display: flex;
  flex-direction: column;
  align-items: center;
  gap: 12px;
  width: 145px;
  height: 53px;
  border: solid #dcdce0;
  border-width: 0 1px;
  font-size: 17.5px;
  color: #444;
`

const HomeIndicator = styled.i`
  position: absolute;
  left: 247px;
  bottom: 15px;
  width: 275px;
  height: 9px;
  border-radius: 5px;
  background: #000;
`

export default App
